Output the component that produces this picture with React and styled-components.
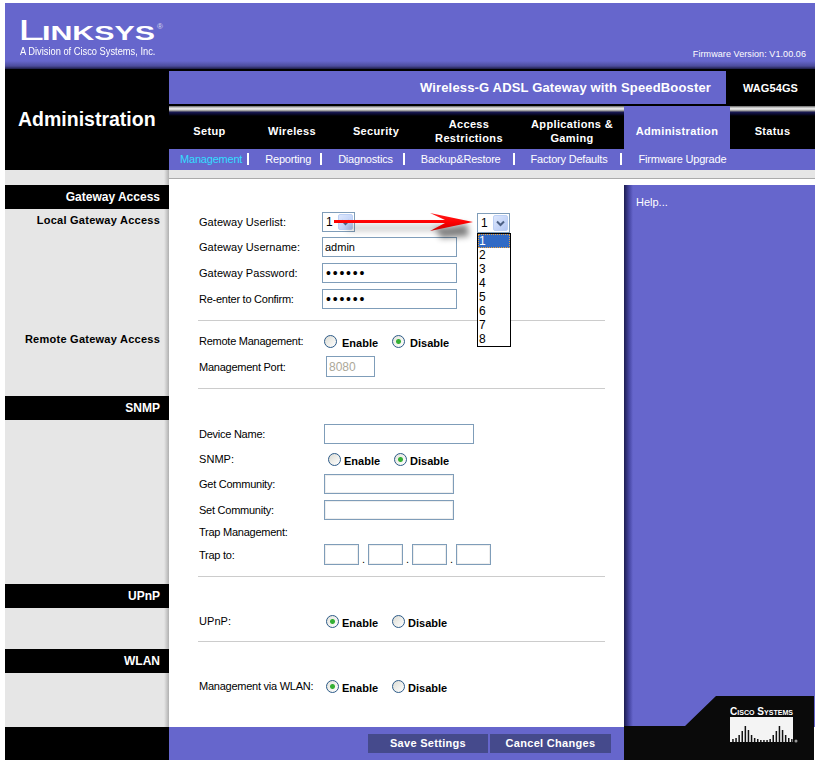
import styled, { createGlobalStyle } from "styled-components";

const Global = createGlobalStyle`
    html, body {
        margin: 0;
        background: #fff;
        font-family: "Liberation Sans", Arial, sans-serif;
        font-size: 11px;
        color: #000;
    }
`

const purple = "#6666cc";

const Page = styled.div`
    width: 810px;
    margin: 3px 0 0 5px;
`

const Header = styled.header`
    height: 66px;
    box-sizing: border-box;
    display: flex;
    justify-content: space-between;
    padding: 15px 9px 11px 15px;
    background: linear-gradient(to bottom, ${purple} calc(100% - 8px), #4c4c9c calc(100% - 3px), #1c1c44 100%);
    color: #fff;
`

const LogoBox = styled.div`
    width: 145px;
    svg {
        display: block;
        overflow: visible;
    }
`

const Tagline = styled.div`
    font-size: 10px;
    line-height: 12px;
    margin-top: -2px;
    transform: scaleX(0.93);
    transform-origin: left;
    white-space: nowrap;
`

const Firmware = styled.div`
    align-self: flex-end;
    font-size: 9px;
    line-height: 12px;
    letter-spacing: 0.08px;
    transform: translateY(2px);
`

const Band = styled.div`
    display: grid;
    grid-template-columns: 164px 1fr;
    height: 101px;
`

const PageName = styled.div`
    background: #000;
    color: #fff;
    font-size: 19.5px;
    font-weight: bold;
    display: flex;
    align-items: center;
    padding-left: 13px;
`

const Nav = styled.div`
    display: flex;
    flex-direction: column;
`

const TitleRow = styled.div`
    height: 37px;
    box-sizing: border-box;
    padding: 2px 0;
    background: #000;
    display: flex;
    color: #fff;
    font-weight: bold;
`

const ProductTitle = styled.div`
    flex: 1;
    background: ${purple};
    display: flex;
    align-items: center;
    justify-content: flex-end;
    padding-right: 15px;
    font-size: 13px;
    letter-spacing: 0.16px;
`

const Model = styled.div`
    width: 89px;
    display: flex;
    align-items: center;
    justify-content: center;
    font-size: 11px;
    letter-spacing: 0.1px;
`

const Tabs = styled.div`
    height: 43px;
    display: grid;
    grid-template-columns: 81px 84px 84px 102px 104px 106px 85px;
`

const Tab = styled.div`
    display: flex;
    align-items: center;
    justify-content: center;
    text-align: center;
    padding-top: 6px;
    box-sizing: border-box;
    color: #fff;
    font-weight: bold;
    font-size: 11px;
    line-height: 14px;
    letter-spacing: 0.35px;
    background: ${p => p.$active ? purple : "linear-gradient(to bottom, #666 0, #ddd 2px, #eee 3px, #888 5px, #1a1a55 6px, #0a0a30 8px, #000 10px)"};
`

const SubNav = styled.div`
    height: 21px;
    box-sizing: border-box;
    padding: 0 0 2px 11px;
    background: ${purple};
    display: flex;
    align-items: center;
`

const SubLink = styled.span`
    color: ${p => p.$active ? "#33ddff" : "#fff"};
    font-size: 11px;
    line-height: 12px;
    letter-spacing: -0.2px;
    white-space: nowrap;
    margin-right: 16px;
    padding-right: ${p => p.$pad}px;
    border-right: ${p => p.$last ? "none" : "2px solid #fff"};
`

const Body = styled.div`
    display: grid;
    grid-template-columns: 164px 1fr;
    height: 557px;
    background: #e6e6e6;
`

const Side = styled.aside`
    display: flex;
    flex-direction: column;
    padding-top: 15px;
    background: linear-gradient(to right, #e6e6e6 calc(100% - 5px), #b0b0b0 100%);
`

const SideBlock = styled.div`
    height: ${p => p.$h}px;
`

const SideBar = styled.div`
    height: 24px;
    background: #000;
    color: #fff;
    font-size: 12px;
    font-weight: bold;
    line-height: 24px;
    text-align: right;
    padding-right: 9px;
`

const SideLabel = styled.div`
    font-weight: bold;
    font-size: 11px;
    line-height: 14px;
    letter-spacing: 0.25px;
    text-align: right;
    padding-right: 9px;
    margin-top: ${p => p.$mt}px;
`

const Sheet = styled.main`
    margin-top: 8px;
    border-top: 1px solid #aaa;
    background: #fff;
    display: grid;
    grid-template-columns: 455px 1fr;
    min-height: 0;
`

const Form = styled.section`
    position: relative;
    padding-left: 29px;
`

const Rule = styled.hr`
    width: 407px;
    height: 1px;
    border: 0;
    margin: ${p => p.$mt || 11}px 0 0;
    background: #ccc;
`

const Row = styled.div`
    display: flex;
    align-items: center;
    min-height: 20px;
    margin-top: ${p => p.$mt}px;
`

const Label = styled.label`
    width: 124px;
    flex: none;
    padding-left: 1px;
    box-sizing: border-box;
    font-size: 11px;
    letter-spacing: ${p => p.$tight ? "-0.25px" : "0.05px"};
    white-space: nowrap;
`

const TextBox = styled.input`
    box-sizing: border-box;
    width: ${p => p.$w}px;
    height: ${p => p.$h || 20}px;
    margin: 0 0 0 ${p => p.$ml || 0}px;
    padding: 0 2px;
    border: 1px solid #7f9db9;
    outline: 0;
    background: #fff;
    font-family: "Liberation Sans", Arial, sans-serif;
    font-size: ${p => p.disabled ? 12 : 11}px;
    color: ${p => p.disabled ? "#aca899" : "#000"};
    box-shadow: ${p => p.$sunken ? "inset 1px 1px 0 #eee, inset -1px -1px 0 #eee" : "none"};
`

const PasswordBox = styled(TextBox).attrs({ type: "password" })`
    font-size: 14px;
    letter-spacing: 1.8px;
    padding-left: 3px;
`

const DropDown = styled.div`
    box-sizing: border-box;
    width: 33px;
    height: 20px;
    border: 1px solid #7f9db9;
    background: #fff;
    display: flex;
    align-items: center;
    justify-content: space-between;
    padding: 1px 1px 1px 3px;
    font-size: 12px;
`

const DropButton = styled.span`
    width: 15px;
    height: 16px;
    border-radius: 2px;
    border: 1px solid #bcd0f5;
    box-sizing: border-box;
    background: linear-gradient(135deg, #dde7fd, #b4c8f4);
    display: flex;
    align-items: center;
    justify-content: center;
`

const RadioGroup = styled.div`
    display: flex;
    align-items: center;
    margin-left: ${p => p.$ml || 0}px;
`

const Radio = styled.input.attrs({ type: "radio", readOnly: true })`
    appearance: none;
    width: 13px;
    height: 13px;
    margin: 0;
    border: 1px solid #2c5a88;
    border-radius: 50%;
    box-sizing: border-box;
    background: ${p => p.checked
        ? "radial-gradient(circle at center, #35b035 0 2px, transparent 3px), linear-gradient(135deg, #e4e4dc, #fff)"
        : "linear-gradient(135deg, #dcdcd4, #fff)"};
`

const RadioText = styled.span`
    font-weight: bold;
    font-size: 11px;
    margin: 3px ${p => p.$mr}px 0 ${p => p.$ml}px;
`

const Dot = styled.span`
    width: 9px;
    text-align: center;
    align-self: flex-end;
    line-height: 12px;
`

const Overlay = styled.div`
    position: absolute;
    left: 308px;
    top: 34px;
    z-index: 2;
`

const OptionList = styled.ul`
    list-style: none;
    margin: 0;
    padding: 0;
    width: 34px;
    box-sizing: border-box;
    border: 1px solid #000;
    background: #fff;
`

const Option = styled.li`
    height: 14px;
    line-height: 14px;
    font-size: 12px;
    padding-left: 1px;
    box-sizing: border-box;
    background: ${p => p.$on ? "#316ac5" : "#fff"};
    color: ${p => p.$on ? "#fff" : "#000"};
    outline: ${p => p.$on ? "1px dotted #e8a040" : "none"};
    outline-offset: -1px;
`

const ArrowSvg = styled.svg`
    position: absolute;
    left: 160px;
    top: 29px;
    z-index: 3;
    pointer-events: none;
`

const Help = styled.aside`
    margin-top: 6px;
    padding: 11px 0 0 12px;
    color: #fff;
    font-size: 11px;
    background: linear-gradient(to right, #1c1c50 0, #4444a0 5px, ${purple} 9px);
`

const Footer = styled.footer`
    height: 33px;
    display: grid;
    grid-template-columns: 164px 455px 191px;
`

const FootLeft = styled.div`
    background: #000;
`

const FootMid = styled.div`
    background: ${purple};
    display: flex;
    align-items: center;
    justify-content: flex-end;
    padding: 0 13px 0 0;
    gap: 2px;
`

const SaveButton = styled.button`
    width: ${p => p.$w}px;
    height: 19px;
    border: 0;
    padding: 0;
    margin-bottom: 1px;
    background: #454a8c;
    color: #fff;
    font-family: "Liberation Sans", Arial, sans-serif;
    font-weight: bold;
    font-size: 11px;
    letter-spacing: 0.3px;
`

const FootRight = styled.div`
    position: relative;
`

const CiscoPlate = styled.div`
    position: absolute;
    left: 0;
    bottom: 0;
    width: 190px;
    height: 64px;
    background: #0a0a0a;
    clip-path: polygon(0 30px, 61px 30px, 92px 0, 100% 0, 100% 100%, 0 100%);
`

const CiscoMark = styled.svg`
    position: absolute;
    left: 106px;
    top: 10px;
`

const cisco = [3, 4, 7, 11, 16, 12, 7, 4, 3, 2, 2, 2, 3, 7, 11, 16, 12, 7, 4, 3];

const tabs = [
    { name: "Setup" },
    { name: "Wireless" },
    { name: "Security" },
    { name: <>Access<br />Restrictions</> },
    { name: <>Applications &amp;<br />Gaming</> },
    { name: "Administration", active: true },
    { name: "Status" },
];

const subLinks = [
    { name: "Management", active: true, pad: 5 },
    { name: "Reporting", pad: 9 },
    { name: "Diagnostics", pad: 10 },
    { name: "Backup&Restore", pad: 12 },
    { name: "Factory Defaults", pad: 13 },
    { name: "Firmware Upgrade", last: true, pad: 0 },
];

const Chevron = () => (
    <svg width="9" height="7" viewBox="0 0 9 7">
        <path d="M1 1.5 L4.5 5 L8 1.5" fill="none" stroke="#4d6185" strokeWidth="2" />
    </svg>
);

const EnableDisable = ({ enabled, ml, textGap, mid }) => (
    <RadioGroup $ml={ml}>
        <Radio checked={enabled} />
        <RadioText $ml={textGap} $mr={mid}>Enable</RadioText>
        <Radio checked={!enabled} />
        <RadioText $ml={textGap} $mr={0}>Disable</RadioText>
    </RadioGroup>
);

const App = () => {
    return (
        <Page>
            <Global />
            <Header>
                <LogoBox>
                    <svg width="145" height="30" viewBox="0 0 145 30">
                        <text x="-2" y="22" fill="#fff" fontFamily="Liberation Sans" fontSize="30" textLength="26" lengthAdjust="spacingAndGlyphs">L</text>
                        <text x="22" y="22" fill="#fff" fontFamily="Liberation Sans" fontWeight="bold" fontSize="21" textLength="113" lengthAdjust="spacingAndGlyphs">INKSYS</text>
                        <text x="137" y="11" fill="#dde" fontFamily="Liberation Sans" fontSize="8">®</text>
                    </svg>
                    <Tagline>A Division of Cisco Systems, Inc.</Tagline>
                </LogoBox>
                <Firmware>Firmware Version: V1.00.06</Firmware>
            </Header>

            <Band>
                <PageName>Administration</PageName>
                <Nav>
                    <TitleRow>
                        <ProductTitle>Wireless-G ADSL Gateway with SpeedBooster</ProductTitle>
                        <Model>WAG54GS</Model>
                    </TitleRow>
                    <Tabs>
                        {tabs.map((t, i) => <Tab key={i} $active={t.active}><span>{t.name}</span></Tab>)}
                    </Tabs>
                    <SubNav>
                        {subLinks.map(l => (
                            <SubLink key={l.name} $active={l.active} $last={l.last} $pad={l.pad}>{l.name}</SubLink>
                        ))}
                    </SubNav>
                </Nav>
            </Band>

            <Body>
                <Side>
                    <SideBlock $h={211}>
                        <SideBar>Gateway Access</SideBar>
                        <SideLabel $mt={4}>Local Gateway Access</SideLabel>
                        <SideLabel $mt={105}>Remote Gateway Access</SideLabel>
                    </SideBlock>
                    <SideBlock $h={188}><SideBar>SNMP</SideBar></SideBlock>
                    <SideBlock $h={65}><SideBar>UPnP</SideBar></SideBlock>
                    <SideBlock $h={78}><SideBar>WLAN</SideBar></SideBlock>
                </Side>

                <Sheet>
                    <Form>
                        <Row $mt={33}>
                            <Label>Gateway Userlist:</Label>
                            <DropDown>1<DropButton><Chevron /></DropButton></DropDown>
                        </Row>
                        <Row $mt={5}>
                            <Label>Gateway Username:</Label>
                            <TextBox $w={135} value="admin" readOnly />
                        </Row>
                        <Row $mt={6}>
                            <Label>Gateway Password:</Label>
                            <PasswordBox $w={135} value="123456" readOnly />
                        </Row>
                        <Row $mt={6}>
                            <Label $tight>Re-enter to Confirm:</Label>
                            <PasswordBox $w={135} value="123456" readOnly />
                        </Row>
                        <Rule />
                        <Row $mt={10}>
                            <Label $tight>Remote Management:</Label>
                            <EnableDisable enabled={false} ml={2} textGap={5} mid={14} />
                        </Row>
                        <Row $mt={5}>
                            <Label $tight>Management Port:</Label>
                            <TextBox $w={49} $h={21} $ml={4} value="8080" disabled readOnly />
                        </Row>
                        <Rule />
                        <Row $mt={35}>
                            <Label $tight>Device Name:</Label>
                            <TextBox $w={150} $ml={2} readOnly />
                        </Row>
                        <Row $mt={5}>
                            <Label>SNMP:</Label>
                            <EnableDisable enabled={false} ml={6} textGap={3} mid={14} />
                        </Row>
                        <Row $mt={5}>
                            <Label $tight>Get Community:</Label>
                            <TextBox $w={130} $ml={2} $sunken readOnly />
                        </Row>
                        <Row $mt={6}>
                            <Label $tight>Set Community:</Label>
                            <TextBox $w={130} $ml={2} $sunken readOnly />
                        </Row>
                        <Row $mt={2}>
                            <Label $tight>Trap Management:</Label>
                        </Row>
                        <Row $mt={2}>
                            <Label $tight>Trap to:</Label>
                            <TextBox $w={35} $h={21} $ml={2} $sunken readOnly />
                            <Dot>.</Dot>
                            <TextBox $w={35} $h={21} $sunken readOnly />
                            <Dot>.</Dot>
                            <TextBox $w={35} $h={21} $sunken readOnly />
                            <Dot>.</Dot>
                            <TextBox $w={35} $h={21} $sunken readOnly />
                        </Row>
                        <Rule />
                        <Row $mt={34}>
                            <Label>UPnP:</Label>
                            <EnableDisable enabled ml={4} textGap={3} mid={14} />
                        </Row>
                        <Rule $mt={10} />
                        <Row $mt={34}>
                            <Label $tight>Management via WLAN:</Label>
                            <EnableDisable enabled ml={4} textGap={3} mid={14} />
                        </Row>

                        <Overlay>
                            <DropDown>1<DropButton><Chevron /></DropButton></DropDown>
                            <OptionList>
                                {[1, 2, 3, 4, 5, 6, 7, 8].map(n => <Option key={n} $on={n === 1}>{n}</Option>)}
                            </OptionList>
                        </Overlay>

                        <ArrowSvg width="160" height="44" viewBox="0 0 160 44">
                            <defs>
                                <filter id="blur" x="-20%" y="-100%" width="140%" height="300%">
                                    <feGaussianBlur stdDeviation="3" />
                                </filter>
                                <linearGradient id="red" x1="0" y1="0" x2="0" y2="1">
                                    <stop offset="0" stopColor="#ff2020" />
                                    <stop offset="0.5" stopColor="#ff0000" />
                                    <stop offset="1" stopColor="#c80000" />
                                </linearGradient>
                            </defs>
                            <path d="M18 17 H112 V23 H18 Z" fill="#000" opacity="0.2" filter="url(#blur)" />
                            <path d="M106 20 L138 16 L140 28 L112 30 Z" fill="#000" opacity="0.5" filter="url(#blur)" />
                            <path d="M5 12 H116 L101 5 L144 14 L101 23 L116 15 H5 Z" fill="url(#red)" />
                        </ArrowSvg>
                    </Form>
                    <Help>Help...</Help>
                </Sheet>
            </Body>

            <Footer>
                <FootLeft />
                <FootMid>
                    <SaveButton $w={120}>Save Settings</SaveButton>
                    <SaveButton $w={121}>Cancel Changes</SaveButton>
                </FootMid>
                <FootRight>
                    <CiscoPlate>
                        <CiscoMark width="72" height="42" viewBox="0 0 72 42">
                            <text x="0" y="9" fill="#fff" fontFamily="Liberation Sans" fontWeight="bold" fontSize="10" textLength="63" lengthAdjust="spacingAndGlyphs" style={{ fontVariant: "small-caps" }}>Cisco Systems</text>
                            <rect x="0" y="11" width="63" height="25" fill="#f4f4f4" />
                            {cisco.map((h, i) => (
                                <rect key={i} x={2.2 + i * 3.1} y={36 - h} width="1.5" height={h} fill="#111" />
                            ))}
                            <circle cx="66" cy="35" r="1.5" fill="#999" />
                        </CiscoMark>
                    </CiscoPlate>
                </FootRight>
            </Footer>
        </Page>
    )
}

export default App;
